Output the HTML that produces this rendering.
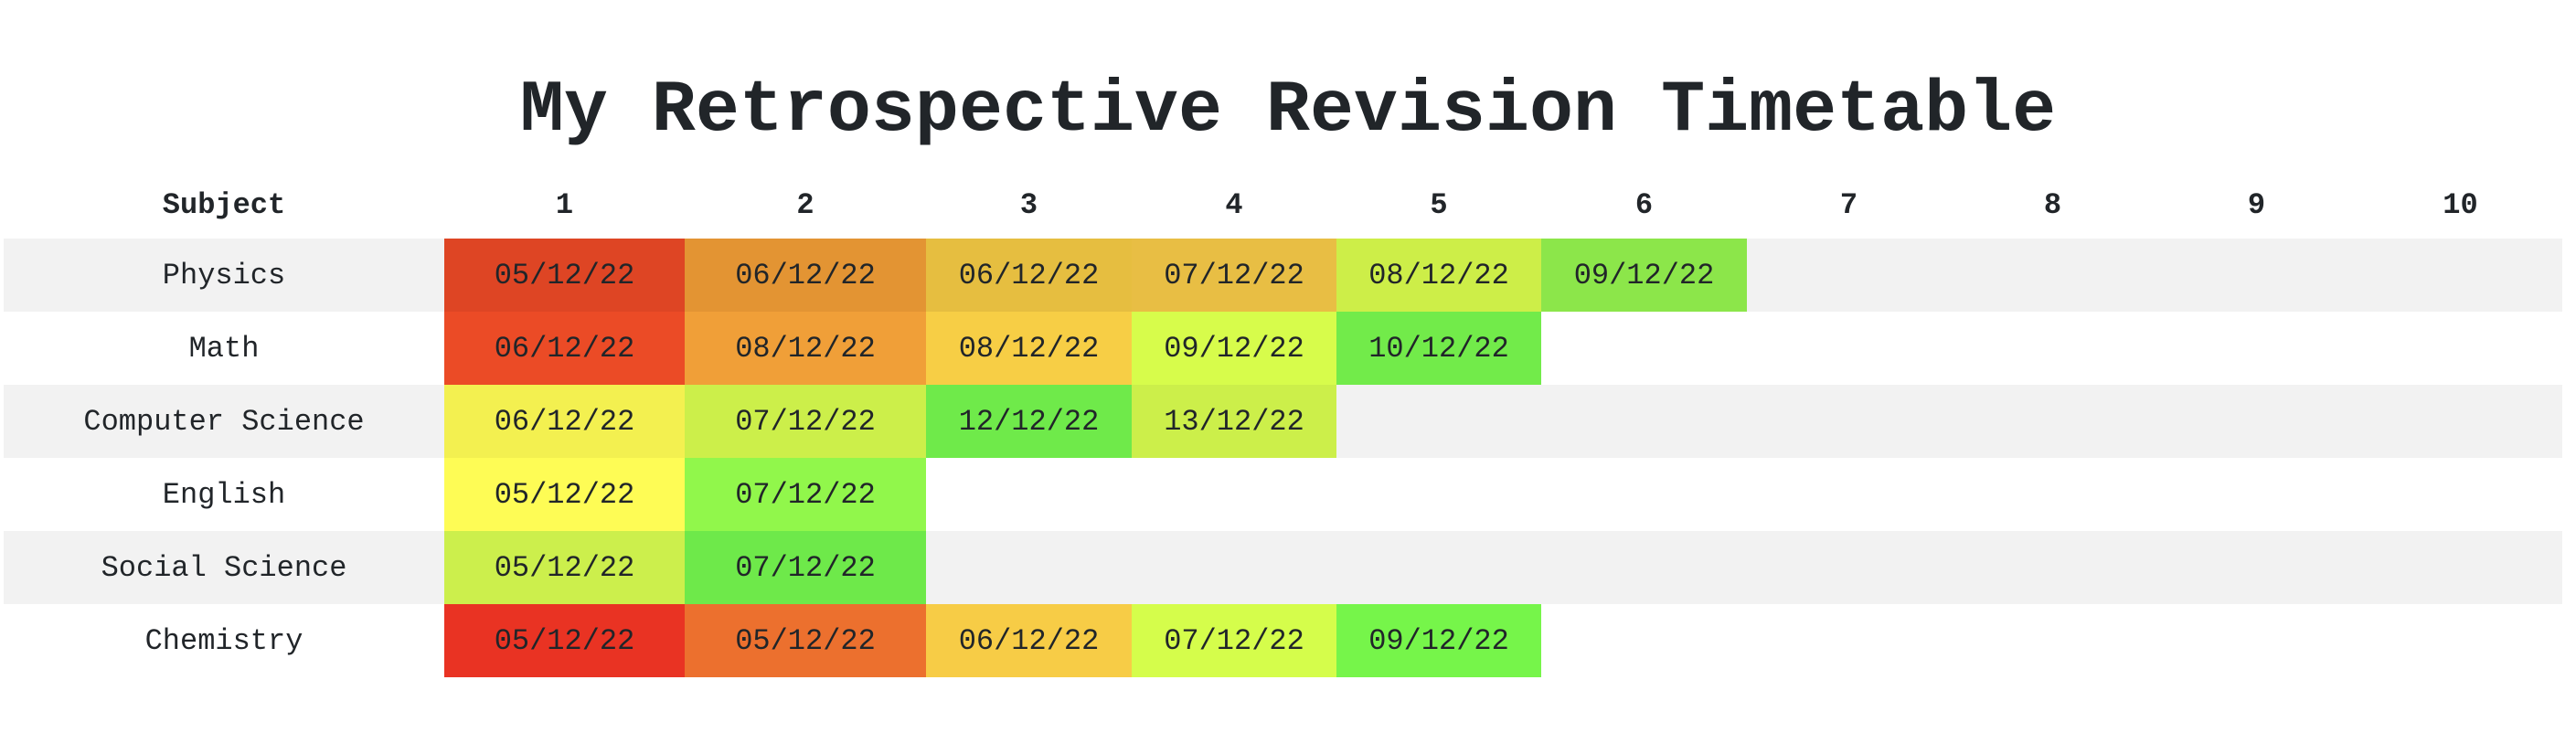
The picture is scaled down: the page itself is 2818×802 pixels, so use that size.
<!DOCTYPE html>
<html><head><meta charset="utf-8"><style>
html,body{margin:0;padding:0;background:#fff;width:2818px;height:802px;overflow:hidden}
body{font-family:"Liberation Mono","DejaVu Sans Mono",monospace;color:#212529}
h1{position:absolute;left:0;top:74px;width:2818px;margin:0;text-align:center;font-size:80px;font-weight:bold;line-height:96px}
table{position:absolute;left:4px;top:182px;border-collapse:collapse;table-layout:fixed;width:2799px}
td,th{padding:0;text-align:center;font-size:32px;height:80px}
th{font-weight:bold;height:79px;padding-top:5px;box-sizing:border-box}
tr.s td{background:#f2f2f2}
</style></head><body>
<h1>My Retrospective Revision Timetable</h1>
<table>
<colgroup><col style="width:482px"><col style="width:263px"><col style="width:264px"><col style="width:225px"><col style="width:224px"><col style="width:224px"><col style="width:225px"><col style="width:223px"><col style="width:223px"><col style="width:223px"><col style="width:223px"></colgroup>
<tr><th>Subject</th><th>1</th><th>2</th><th>3</th><th>4</th><th>5</th><th>6</th><th>7</th><th>8</th><th>9</th><th>10</th></tr>
<tr class="s"><td>Physics</td><td style="background:#de4524">05/12/22</td><td style="background:#e39433">06/12/22</td><td style="background:#e6be40">06/12/22</td><td style="background:#e8be44">07/12/22</td><td style="background:#cdee48">08/12/22</td><td style="background:#8ce64a">09/12/22</td><td></td><td></td><td></td><td></td></tr>
<tr><td>Math</td><td style="background:#eb4b26">06/12/22</td><td style="background:#f09f38">08/12/22</td><td style="background:#f7ce45">08/12/22</td><td style="background:#d7fc4b">09/12/22</td><td style="background:#72eb4a">10/12/22</td><td></td><td></td><td></td><td></td><td></td></tr>
<tr class="s"><td>Computer Science</td><td style="background:#f3f050">06/12/22</td><td style="background:#ccef4a">07/12/22</td><td style="background:#6fea4a">12/12/22</td><td style="background:#ccef4a">13/12/22</td><td></td><td></td><td></td><td></td><td></td><td></td></tr>
<tr><td>English</td><td style="background:#fefc55">05/12/22</td><td style="background:#91f74b">07/12/22</td><td></td><td></td><td></td><td></td><td></td><td></td><td></td><td></td></tr>
<tr class="s"><td>Social Science</td><td style="background:#ccef4c">05/12/22</td><td style="background:#6ee94a">07/12/22</td><td></td><td></td><td></td><td></td><td></td><td></td><td></td><td></td></tr>
<tr><td>Chemistry</td><td style="background:#e93323">05/12/22</td><td style="background:#ec702e">05/12/22</td><td style="background:#f7cc46">06/12/22</td><td style="background:#d5fd4b">07/12/22</td><td style="background:#76f54a">09/12/22</td><td></td><td></td><td></td><td></td><td></td></tr>
</table>
</body></html>
